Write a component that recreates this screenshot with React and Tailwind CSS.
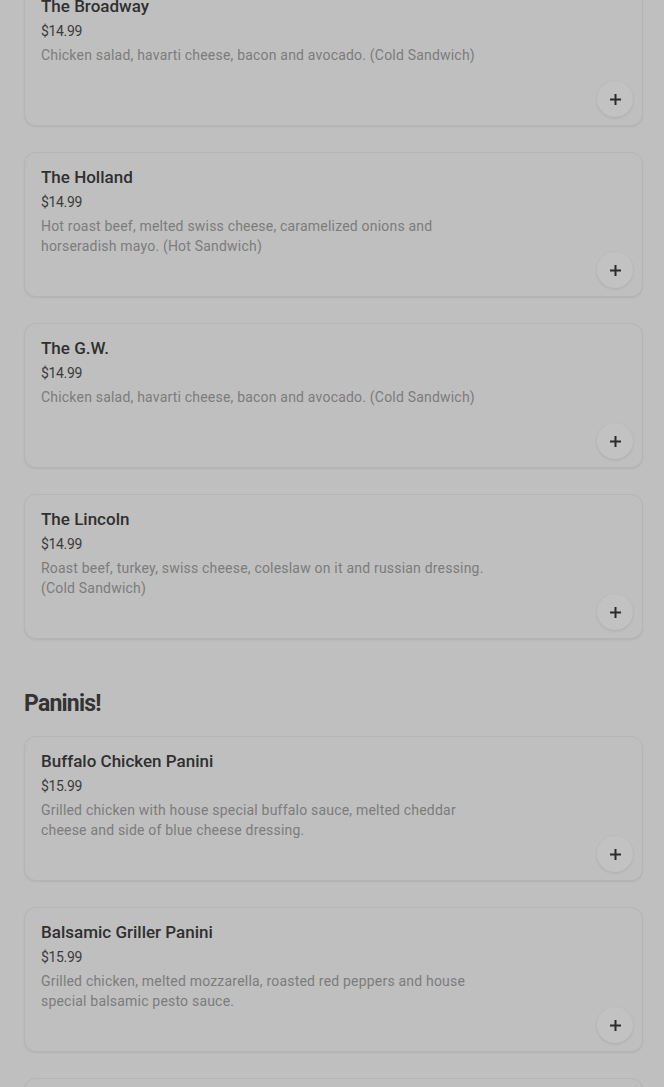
import React from 'react';

const sandwiches = [
  {
    name: 'The Broadway',
    price: '$14.99',
    desc: 'Chicken salad, havarti cheese, bacon and avocado. (Cold Sandwich)',
  },
  {
    name: 'The Holland',
    price: '$14.99',
    desc: 'Hot roast beef, melted swiss cheese, caramelized onions and horseradish mayo. (Hot Sandwich)',
  },
  {
    name: 'The G.W.',
    price: '$14.99',
    desc: 'Chicken salad, havarti cheese, bacon and avocado. (Cold Sandwich)',
  },
  {
    name: 'The Lincoln',
    price: '$14.99',
    desc: 'Roast beef, turkey, swiss cheese, coleslaw on it and russian dressing. (Cold Sandwich)',
  },
];

const paninis = [
  {
    name: 'Buffalo Chicken Panini',
    price: '$15.99',
    desc: 'Grilled chicken with house special buffalo sauce, melted cheddar cheese and side of blue cheese dressing.',
  },
  {
    name: 'Balsamic Griller Panini',
    price: '$15.99',
    desc: 'Grilled chicken, melted mozzarella, roasted red peppers and house special balsamic pesto sauce.',
  },
  { name: '', price: '', desc: '' },
];

const MenuCard = ({ item }) => {
  return (
    <div className="h-[145px] flex justify-between items-end rounded-xl border border-[#b5b5b5] bg-[#bfbfbf] pl-4 pr-[9px] pb-[8px] shadow-[0_1px_2px_rgba(0,0,0,0.07)]">
      <div className="self-start pt-3">
        <div className="h-6 text-[17px] leading-6 font-medium text-[#303030]">{item.name}</div>
        <div className="mt-[3px] text-sm leading-5 tracking-tight text-[#3c3c3c]">{item.price}</div>
        <p className="mt-[4px] max-w-[445px] text-sm leading-5 tracking-[0.2px] text-[#7c7c7c]">{item.desc}</p>
      </div>
      <button
        type="button"
        className="shrink-0 size-9 rounded-full bg-[#c2c2c2] shadow-[0_1px_3px_rgba(0,0,0,0.1)] inline-flex items-center justify-center text-[#2b2b2b]"
      >
        <svg
          width="11"
          height="11"
          viewBox="0 0 11 11"
          fill="none"
          stroke="currentColor"
          strokeWidth="2"
        >
          <path d="M5.5 0v11"></path>
          <path d="M0 5.5h11"></path>
        </svg>
      </button>
    </div>
  );
};

export default function App() {
  return (
    <div className="min-h-screen bg-[#bfbfbf] font-['Roboto',sans-serif] overflow-hidden">
      <div className="-mt-[19px] px-6 pr-[21px]">
        <div className="flex flex-col gap-[26px]">
          {sandwiches.map((item) => (
            <MenuCard key={item.name} item={item} />
          ))}
        </div>
        <h2 className="mt-[49px] mb-[16px] text-[23px] leading-8 font-bold tracking-[-0.8px] text-[#333333]">
          Paninis!
        </h2>
        <div className="flex flex-col gap-[26px]">
          {paninis.map((item, i) => (
            <MenuCard key={i} item={item} />
          ))}
        </div>
      </div>
    </div>
  );
}
